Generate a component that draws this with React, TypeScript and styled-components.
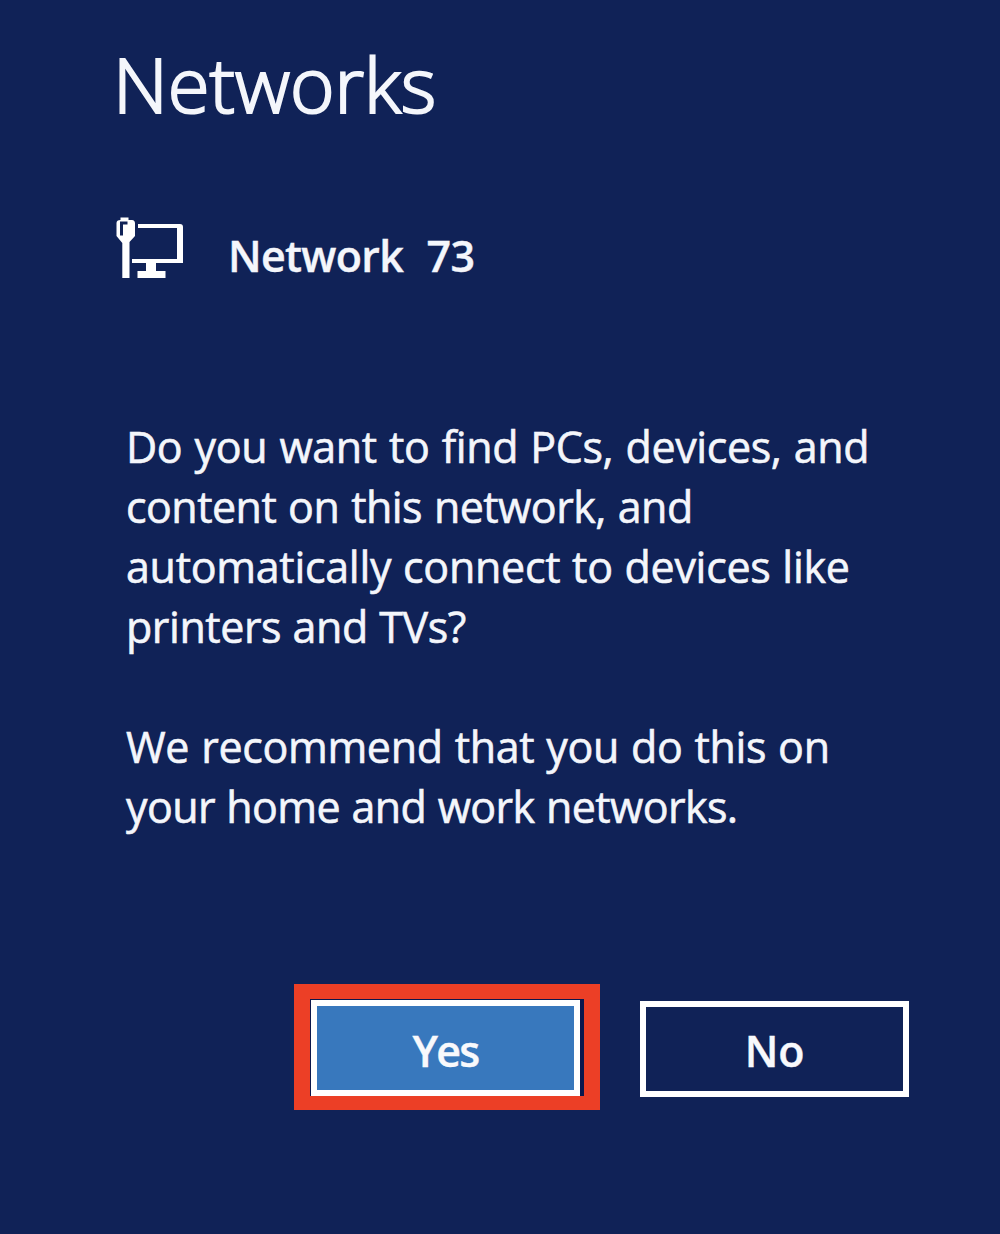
import React from "react";
import styled, { createGlobalStyle } from "styled-components";

const Global = createGlobalStyle`
  * { box-sizing: border-box; }
  body { margin: 0; background: #102257; }
`;

const Panel = styled.main`
  width: 1000px;
  height: 1234px;
  padding: 30px 0 0 113px;
  background: #102257;
  color: #f4f6fb;
  font-family: "Open Sans", "Noto Sans", sans-serif;
  overflow: hidden;
`;

const Title = styled.h1`
  margin: 0;
  height: 108px;
  line-height: 107px;
  font-size: 76px;
  font-weight: 300;
  letter-spacing: 0;
  -webkit-text-stroke: 2.2px #f4f6fb;
  white-space: nowrap;
`;

const NetworkRow = styled.section`
  display: flex;
  margin-top: 78px;
  height: 80px;
`;
const NetworkName = styled.h2`
  margin: 10px 0 0 43px;
  line-height: 60px;
  font-size: 43px;
  font-weight: 600;
  letter-spacing: -0.7px;
  word-spacing: 1.3px;
  -webkit-text-stroke: 0.4px #f4f6fb;
  white-space: pre;
`;
const Message = styled.div`
  margin: 121px 0 0 13px;
`;
const Line = styled.p<{ $track?: number; $gap?: number }>`
  margin: 0;
  height: 60px;
  line-height: 60px;
  font-size: 43px;
  letter-spacing: ${(p) => p.$track ?? 0}px;
  word-spacing: ${(p) => p.$gap ?? 0}px;
  -webkit-text-stroke: 0.6px #f4f6fb;
  white-space: nowrap;
`;
const Actions = styled.div`
  display: flex;
  align-items: flex-start;
  gap: 40px;
  margin: 147px 0 0 181px;
`;
const Highlight = styled.div`
  width: 306px;
  height: 126px;
  padding: 15px 15px 14px 16px;
  background: #ec3f26;
`;
const Recess = styled.div`
  padding: 1px 4px 0 1px;
  width: 274px;
  background: #0b174d;
`;
const Button = styled.button<{ $primary?: boolean }>`
  display: block;
  width: 269px;
  height: 96px;
  margin-top: ${(p) => (p.$primary ? 0 : 17)}px;
  padding: ${(p) => (p.$primary ? "4px 0 0" : "2px 0 0")};
  border: 6px solid #fff;
  background: ${(p) => (p.$primary ? "#3878bd" : "#102257")};
  color: #f8f9fc;
  font: 600 43px "Open Sans", sans-serif;
  letter-spacing: ${(p) => (p.$primary ? -1.7 : -0.3)}px;
  -webkit-text-stroke: 0.4px #f8f9fc;
`;

export default function App() {
  return (
    <Panel>
      <Global />
      <Title>Networks</Title>
      <NetworkRow>
        <svg width="72" height="64" viewBox="0 0 72 64" fill="#fff">
          <path
            fillRule="evenodd"
            d="M7.5 1.5H15.5V4H19Q22 4 22 7.5V20L16.5 26V62H9.3V27L3.5 20V7Q3.5 4 7.5 4ZM7 5.5V19.5H10V8.5H14.5V5.5Z"
          />
          <path d="M25 8H67Q70 8 70 11V47H43V55H52.5V62H24.5V55H33V47H19V43H64V12H25Z" />
        </svg>
        <NetworkName>Network  73</NetworkName>
      </NetworkRow>
      <Message>
        <Line $track={-0.4} $gap={1.5}>Do you want to find PCs, devices, and</Line>
        <Line $track={-0.55} $gap={1.3}>content on this network, and</Line>
        <Line $track={-0.3} $gap={1}>automatically connect to devices like</Line>
        <Line $track={-0.45} $gap={0.8}>printers and TVs?</Line>
        <Line />
        <Line $track={-0.35} $gap={1.2}>We recommend that you do this on</Line>
        <Line $track={-0.6} $gap={0.8}>your home and work networks.</Line>
      </Message>
      <Actions>
        <Highlight>
          <Recess>
            <Button $primary>Yes</Button>
          </Recess>
        </Highlight>
        <Button>No</Button>
      </Actions>
    </Panel>
  );
}
